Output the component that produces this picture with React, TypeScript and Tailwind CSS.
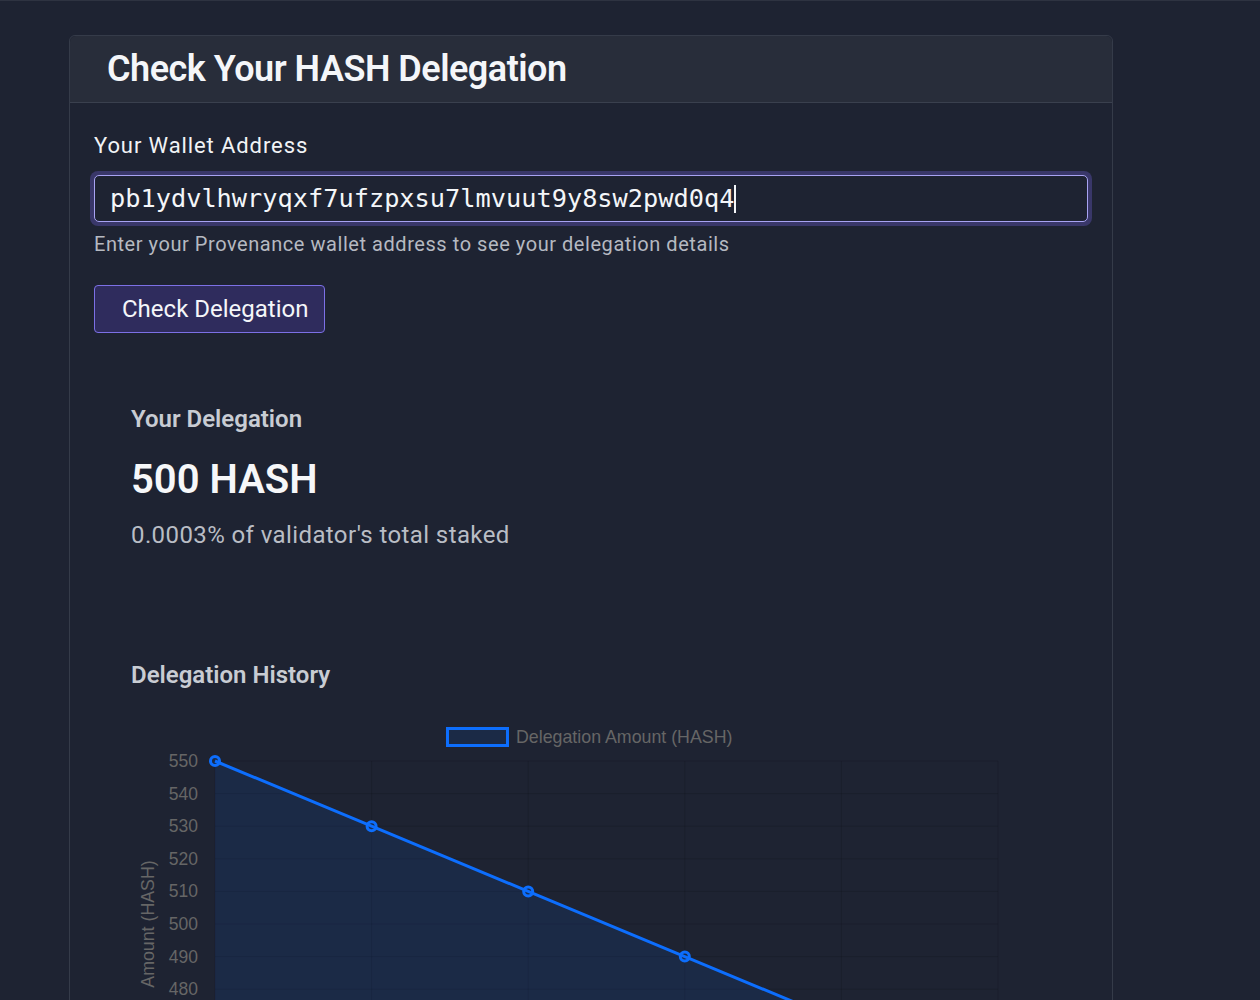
import React from "react";

const sans = { fontFamily: "Roboto, 'Noto Sans', sans-serif" };

function Chart() {
  const ox = 84;
  const step = 156.6;
  const y0 = 49;
  const dy = 32.6;
  const ticks = [550, 540, 530, 520, 510, 500, 490, 480, 470, 460, 450, 440];
  const data = [550, 530, 510, 490, 470, 450];
  const yOf = (v: number) => y0 + ((550 - v) / 10) * dy;
  const bottom = yOf(440);
  const pts = data.map((v, i) => [ox + i * step, yOf(v)] as const);
  const linePath = pts.map((p, i) => `${i ? "L" : "M"}${p[0]},${p[1]}`).join(" ");
  const areaPath = `${linePath} L${pts[pts.length - 1][0]},${bottom} L${ox},${bottom} Z`;
  return (
    <svg width="917" height="460" viewBox="0 0 917 460" className="block">
      <g stroke="rgba(0,0,0,0.12)" strokeWidth="1">
        {ticks.map((t) => (
          <line key={t} x1={ox} x2={ox + 5 * step} y1={yOf(t)} y2={yOf(t)} />
        ))}
        {[0, 1, 2, 3, 4, 5].map((i) => (
          <line key={i} x1={ox + i * step} x2={ox + i * step} y1={y0} y2={bottom} />
        ))}
      </g>
      <path d={areaPath} fill="rgba(13,110,253,0.1)" />
      <path d={linePath} fill="none" stroke="#0d6efd" strokeWidth="3" />
      {pts.map((p, i) => (
        <circle key={i} cx={p[0]} cy={p[1]} r="4.5" fill="rgba(13,110,253,0.1)" stroke="#0d6efd" strokeWidth="3" />
      ))}
      <g fill="#666" fontFamily="'Liberation Sans', Arial, sans-serif" fontSize="17.5">
        {ticks.map((t) => (
          <text key={t} x={67} y={yOf(t) + 6} textAnchor="end">
            {t}
          </text>
        ))}
        <text x={0} y={0} textAnchor="middle" fontSize="17.8" transform="translate(23,212) rotate(-90)">
          Amount (HASH)
        </text>
        <text x={385} y={30.5} fontSize="17.8">Delegation Amount (HASH)</text>
      </g>
      <rect x={316.5} y={16.5} width={60} height={17} fill="rgba(13,110,253,0.1)" stroke="#0d6efd" strokeWidth="3" />
    </svg>
  );
}

export default function App() {
  return (
    <div className="min-h-screen bg-[#1e2332] border-t border-[#2e3341] pt-[34px] pl-[69px] pr-[147px]" style={sans}>
      <div className="rounded-t-[6px] border border-[#353b49] min-h-[1100px]">
        <div className="h-[67px] bg-[#282d3a] border-b border-[#3a404e] rounded-t-[6px] flex items-center pl-[37px]">
          <h1 className="text-[36px] font-semibold text-[#f4f6f9] tracking-[-0.5px]">Check Your HASH Delegation</h1>
        </div>
        <div className="pt-[28px] px-[24px]">
          <div className="text-[22px] leading-[30px] text-[#f1f3f6] tracking-[0.9px]">Your Wallet Address</div>
          <div className="mt-[10px] rounded-[8px] p-[4px] -mx-[4px] bg-[#393769]">
            <div className="h-[47px] rounded-[5px] border border-[#a8a3f2] bg-[#1e2332] flex items-center pl-[15px]">
              <span className="text-[25.3px] text-[#f4f6f9]" style={{ fontFamily: "'DejaVu Sans Mono', monospace" }}>
                pb1ydvlhwryqxf7ufzpxsu7lmvuut9y8sw2pwd0q4
              </span>
              <span className="inline-block w-[2px] h-[28px] bg-[#f4f6f9]" />
            </div>
          </div>
          <div className="mt-[4px] text-[20px] leading-[28px] text-[#b5b9c1] tracking-[0.55px]">
            Enter your Provenance wallet address to see your delegation details
          </div>
          <button className="mt-[27px] h-[48px] w-[231px] rounded-[4px] border border-[#7c70e6] bg-[#2f2c5d] text-[24px] text-[#f4f6f9] text-left pl-[27px]">
            Check Delegation
          </button>
          <div className="pl-[37px]">
            <div className="mt-[70px] text-[24px] leading-[32px] font-semibold text-[#c8ccd3]">Your Delegation</div>
            <div className="mt-[20px] text-[40px] leading-[50px] font-semibold text-[#f6f7f9]">500 HASH</div>
            <div className="mt-[14px] text-[24px] leading-[32px] text-[#b9bdc5] tracking-[0.4px]">0.0003% of validator's total staked</div>
            <div className="mt-[108px] text-[24px] leading-[32px] font-semibold text-[#c8ccd3]">Delegation History</div>
            <div className="mt-[21px]">
              <Chart />
            </div>
          </div>
        </div>
      </div>
    </div>
  );
}
